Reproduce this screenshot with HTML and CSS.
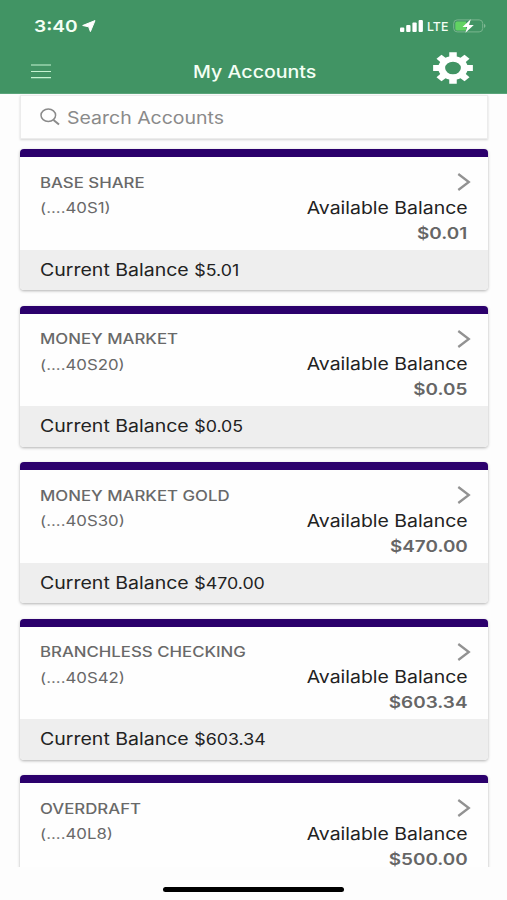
FILE: index.html
```
<!DOCTYPE html>
<html lang="en">
<head>
<meta charset="utf-8">
<title>My Accounts</title>
<link rel="stylesheet" href="styles.css">
</head>
<body>
<div class="screen">
  <header class="header">
    <div class="status">
      <span class="time wide">3:40</span>
      <svg class="arrow" width="14" height="13" viewBox="0 0 14 13"><path d="M13 .6 8.400 11.600 6.700 6.800.7 5.500z" fill="#fff" stroke="#fff" stroke-linejoin="round"/></svg>
      <svg class="signal" width="24" height="12" viewBox="0 0 24 12" fill="#fff"><rect y="7.500" width="4.300" height="4.500" rx="1"/><rect x="6.200" y="5" width="4.300" height="7" rx="1"/><rect x="12.400" y="2.500" width="4.300" height="9.500" rx="1"/><rect x="18.600" width="4.300" height="12" rx="1"/></svg>
      <span class="lte wide">LTE</span>
      <svg class="battery" width="34" height="14" viewBox="0 0 34 14"><rect x=".7" y=".9" width="29" height="12" rx="3.500" fill="none" stroke="#7ab58f"/><path d="M31 4.700q3 2.200 0 4.400z" fill="#83b996"/><path d="M4 2.500h9v9H4q-1.700 0-1.700-2V4.500q0-2 1.700-2z" fill="#62d262"/><path d="M17.800.2 9.500 8h4.700l-1.800 5.700L20.800 6H16z" fill="#fff"/></svg>
    </div>
    <div class="nav">
      <svg class="menu" width="20" height="15" viewBox="0 0 20 15" stroke="#c6f3d1" stroke-width="1.200"><path d="M0 1h20M0 7.500h20M0 13.700h20"/></svg>
      <h1 class="title wide">My Accounts</h1>
      <svg class="gear" width="40" height="32" viewBox="-20 -16 40 32"><g transform="scale(1.25 1)" fill="#fff"><path fill-rule="evenodd" d="M-3-11.500V-15.700H3V-11.500A12 12 0 0 1 6-10.200L9.200-13.200 13.200-9.200 10.200-6A12 12 0 0 1 11.500-3H15.900V3H11.500A12 12 0 0 1 10.200 6L13.200 9.200 9.200 13.200 6 10.200A12 12 0 0 1 3 11.500V15.700H-3V11.500A12 12 0 0 1-6 10.200L-9.200 13.200-13.200 9.200-10.200 6A12 12 0 0 1-11.500 3H-15.900V-3H-11.500A12 12 0 0 1-10.200-6L-13.200-9.200-9.200-13.200-6-10.200A12 12 0 0 1-3-11.500zM0-6.300A6.300 6.300 0 1 0 0 6.300 6.300 6.300 0 1 0 0-6.300z"/></g></svg>
    </div>
  </header>
  <main class="content">
    <div class="search">
      <svg width="21" height="18" viewBox="0 0 21 18" fill="none" stroke="#8a8a8a" stroke-width="1.500"><ellipse cx="8.300" cy="7.300" rx="7.300" ry="6.200"/><path d="m13.500 12 5.500 4.500" stroke-width="2"/></svg>
      <span class="placeholder wide">Search Accounts</span>
    </div>
    <section class="card">
      <div class="details">
        <span class="name wide">BASE SHARE</span><svg class="chevron" width="14" height="18" viewBox="0 0 14 18"><path d="m1.300 1 10.500 8-10.500 8"/></svg>
        <span class="number wide">(....40S1)</span><span class="label wide">Available Balance</span>
        <span class="amount wide">$0.01</span>
      </div>
      <div class="current"><span class="wide">Current Balance <small>$5.01</small></span></div>
    </section>
    <section class="card">
      <div class="details">
        <span class="name wide">MONEY MARKET</span><svg class="chevron" width="14" height="18" viewBox="0 0 14 18"><path d="m1.300 1 10.500 8-10.500 8"/></svg>
        <span class="number wide">(....40S20)</span><span class="label wide">Available Balance</span>
        <span class="amount wide">$0.05</span>
      </div>
      <div class="current"><span class="wide">Current Balance <small>$0.05</small></span></div>
    </section>
    <section class="card">
      <div class="details">
        <span class="name wide">MONEY MARKET GOLD</span><svg class="chevron" width="14" height="18" viewBox="0 0 14 18"><path d="m1.300 1 10.500 8-10.500 8"/></svg>
        <span class="number wide">(....40S30)</span><span class="label wide">Available Balance</span>
        <span class="amount wide">$470.00</span>
      </div>
      <div class="current"><span class="wide">Current Balance <small>$470.00</small></span></div>
    </section>
    <section class="card">
      <div class="details">
        <span class="name wide">BRANCHLESS CHECKING</span><svg class="chevron" width="14" height="18" viewBox="0 0 14 18"><path d="m1.300 1 10.500 8-10.500 8"/></svg>
        <span class="number wide">(....40S42)</span><span class="label wide">Available Balance</span>
        <span class="amount wide">$603.34</span>
      </div>
      <div class="current"><span class="wide">Current Balance <small>$603.34</small></span></div>
    </section>
    <section class="card">
      <div class="details">
        <span class="name wide">OVERDRAFT</span><svg class="chevron" width="14" height="18" viewBox="0 0 14 18"><path d="m1.300 1 10.500 8-10.500 8"/></svg>
        <span class="number wide">(....40L8)</span><span class="label wide">Available Balance</span>
        <span class="amount wide">$500.00</span>
      </div>
      <div class="current"></div>
    </section>
  </main>
  <footer class="home"><div class="indicator"></div></footer>
</div>
</body>
</html>
```
FILE: styles.css
```
* { box-sizing: border-box; }
body { margin: 0; background: #fdfdfd; font-family: Inter, "Liberation Sans", sans-serif; }
svg { display: block; flex: none; }
.screen { width: 507px; height: 900px; display: flex; flex-direction: column; overflow: hidden; }
.wide { display: inline-block; white-space: nowrap; transform: scaleX(1.2); transform-origin: left center; }
.header { height: 93.500px; flex: none; background: #419464; border-bottom: 1px solid #5aa47a; color: #f4fff5; }
.status { display: flex; align-items: center; height: 52px; padding: 0 20px 0 33.500px; }
.time { width: 48px; font-size: 16.500px; font-weight: 600; transform: scaleX(1.16); }
.signal { margin-left: auto; }
.lte { width: 26px; margin-left: 3.500px; font-size: 12px; font-weight: 500; transform: scaleX(1.03); }
.nav { display: grid; grid-template-columns: 42px 1fr 42px; align-items: center; height: 38px; padding: 0 34.500px 0 31px; }
.menu { margin-top: -1px; }
.title { margin: 1px 0 0; font-size: 17px; line-height: 39px; font-weight: 500; text-align: center; transform: translateX(3px) scaleX(1.152); transform-origin: center; }
.gear { margin: -8px 0 0; justify-self: end; }
.content { height: 773px; flex: none; overflow: hidden; padding: 1.800px 19.500px 0 20.300px; }
.search { display: flex; align-items: center; gap: 6px; height: 44px; padding-left: 18.500px; margin-bottom: 10px; background: #fefefe; border: 1px solid #ececec; box-shadow: 0 1px 2px rgba(0,0,0,.16); color: #8a8a8a; font-size: 17px; }
.placeholder { margin-top: 1px; transform: scaleX(1.146); }
.card { height: 141px; margin-bottom: 15.500px; border-radius: 4px; background: #fefefe; box-shadow: 0 1px 3px rgba(0,0,0,.3); border-top: 8px solid #2b006c; overflow: hidden; }
.details { display: grid; grid-template-columns: auto auto; grid-template-rows: repeat(3, 25.700px); height: 92.500px; padding: 12.300px 20px 0; line-height: 25.700px; }
.name { font-size: 14px; font-weight: 500; color: #696969; }
.number { font-size: 14px; color: #686868; }
.chevron { justify-self: end; margin: 3.500px -3.800px 0 0; fill: none; stroke: #929292; stroke-width: 2.300; }
.label { justify-self: end; margin-top: .4px; font-size: 17px; color: #222; transform: scaleX(1.144); transform-origin: right center; }
.amount { grid-column: 2; align-self: center; justify-self: end; line-height: 16px; font-size: 15.500px; font-weight: 600; color: #666; transform: scaleX(1.22); transform-origin: right center; }
.current { height: 40.500px; padding-left: 20px; background: #eee; line-height: 41px; font-size: 17px; color: #222; }
.current .wide { transform: scaleX(1.148); }
.current small { font-size: 15.500px; }
.home { flex: 1; display: flex; justify-content: center; padding-top: 20px; }
.indicator { width: 181px; height: 5.500px; border-radius: 3px; background: #000; }
```
